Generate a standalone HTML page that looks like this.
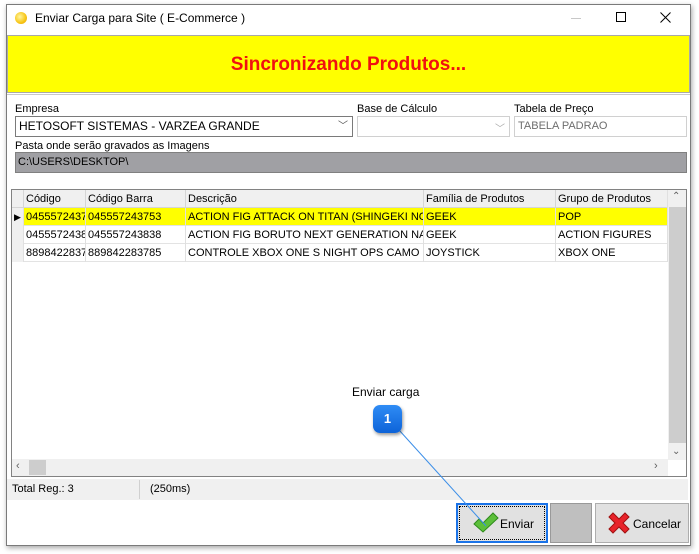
<!DOCTYPE html>
<html><head><style>
*{box-sizing:border-box;margin:0;padding:0}
body{width:699px;height:554px;background:#fff;font-family:"Liberation Sans",sans-serif;font-size:11px;color:#000;position:relative;overflow:hidden}
.a{position:absolute}
.win{left:6px;top:4px;width:685px;height:542px;border:1px solid #7a7a7a;background:#fff;box-shadow:1px 2px 5px rgba(0,0,0,.35)}
.lbl{font-size:11px;color:#000}
.cell{position:absolute;top:0;height:18px;line-height:18px;padding-left:2px;white-space:nowrap;overflow:hidden;border-right:1px solid #e0e0e0}
.row{position:absolute;left:12px;width:656px;height:18px;border-bottom:1px solid #e3e3e3}
</style></head><body>
<div class="a win"></div>
<div class="a" style="left:15px;top:12px;width:12px;height:12px;border-radius:50%;background:radial-gradient(circle at 40% 40%,#fff6a0,#f7c515 60%,#e89a00)"></div>
<div class="a" style="left:35px;top:11px;font-size:12px;color:#000">Enviar Carga para Site ( E-Commerce )</div>
<div class="a" style="left:571px;top:18px;width:10px;height:1px;background:#c8c8c8"></div>
<div class="a" style="left:616px;top:12px;width:10px;height:10px;border:1px solid #000"></div>
<svg class="a" style="left:660px;top:12px" width="11" height="11"><path d="M0.5 0.5L10.5 10.5M10.5 0.5L0.5 10.5" stroke="#000" stroke-width="1"/></svg>
<div class="a" style="left:7px;top:35px;width:683px;height:58px;background:#ffff00;border:1px solid #a8a8a8;text-align:center;line-height:58px;font-weight:bold;font-size:19px;color:#f01010">Sincronizando Produtos...</div>
<div class="a" style="left:7px;top:94px;width:683px;height:1px;background:#c8c8c8"></div>
<div class="a lbl" style="left:15px;top:103px">Empresa</div>
<div class="a" style="left:15px;top:116px;width:338px;height:21px;border:1px solid #7a7a7a;padding-left:3px;line-height:19px;font-size:12px">HETOSOFT SISTEMAS - VARZEA GRANDE<span style="position:absolute;right:4px;top:0;color:#555;font-size:10px">﹀</span></div>
<div class="a lbl" style="left:357px;top:103px">Base de Cálculo</div>
<div class="a" style="left:357px;top:116px;width:153px;height:21px;border:1px solid #d0d0d0;background:#fff"><span style="position:absolute;right:4px;top:3px;color:#aaa;font-size:10px">﹀</span></div>
<div class="a lbl" style="left:514px;top:103px">Tabela de Preço</div>
<div class="a" style="left:514px;top:116px;width:173px;height:21px;border:1px solid #d0d0d0;padding-left:3px;line-height:19px;color:#6d6d6d">TABELA PADRAO</div>
<div class="a lbl" style="left:15px;top:140px">Pasta onde serão gravados as Imagens</div>
<div class="a" style="left:15px;top:152px;width:672px;height:21px;background:#a0a0a4;border:1px solid #808080;padding-left:2px;line-height:19px">C:\USERS\DESKTOP\</div>
<div class="a" style="left:11px;top:189px;width:676px;height:288px;border:1px solid #828282;background:#fff"></div>
<div class="a" style="left:12px;top:190px;width:656px;height:18px;background:#f0f0f0;border-bottom:1px solid #d5d5d5">
<div class="cell" style="left:0;width:12px;border-right:1px solid #d5d5d5"></div>
<div class="cell" style="left:12px;width:62px;border-right-color:#d5d5d5">Código</div>
<div class="cell" style="left:74px;width:100px;border-right-color:#d5d5d5">Código Barra</div>
<div class="cell" style="left:174px;width:238px;border-right-color:#d5d5d5">Descrição</div>
<div class="cell" style="left:412px;width:132px;border-right-color:#d5d5d5">Família de Produtos</div>
<div class="cell" style="left:544px;width:112px">Grupo de Produtos</div>
</div>
<div class="row" style="top:208px">
<div class="cell" style="left:0;width:12px;background:#f0f0f0;font-size:9px;line-height:18px">▶</div>
<div style="position:absolute;left:12px;top:0;width:644px;height:17px;background:#ffff00"></div>
<div class="cell" style="left:12px;width:62px">045557243753</div><div class="cell" style="left:74px;width:100px">045557243753</div><div class="cell" style="left:174px;width:238px">ACTION FIG ATTACK ON TITAN (SHINGEKI NO KYOJIN)</div><div class="cell" style="left:412px;width:132px">GEEK</div><div class="cell" style="left:544px;width:112px">POP</div>
</div>
<div class="row" style="top:226px">
<div class="cell" style="left:0;width:12px;background:#f0f0f0"></div>
<div class="cell" style="left:12px;width:62px">045557243838</div><div class="cell" style="left:74px;width:100px">045557243838</div><div class="cell" style="left:174px;width:238px">ACTION FIG BORUTO NEXT GENERATION NARUTO</div><div class="cell" style="left:412px;width:132px">GEEK</div><div class="cell" style="left:544px;width:112px">ACTION FIGURES</div>
</div>
<div class="row" style="top:244px">
<div class="cell" style="left:0;width:12px;background:#f0f0f0"></div>
<div class="cell" style="left:12px;width:62px">889842283785</div><div class="cell" style="left:74px;width:100px">889842283785</div><div class="cell" style="left:174px;width:238px">CONTROLE XBOX ONE S NIGHT OPS CAMO</div><div class="cell" style="left:412px;width:132px">JOYSTICK</div><div class="cell" style="left:544px;width:112px">XBOX ONE</div>
</div>
<div class="a" style="left:668px;top:190px;width:18px;height:270px;background:#f0f0f0"></div>
<div class="a" style="left:669px;top:207px;width:17px;height:236px;background:#cdcdcd"></div>
<div class="a" style="left:672px;top:191px;font-size:10px;color:#606060">⌃</div>
<div class="a" style="left:672px;top:446px;font-size:10px;color:#606060">⌄</div>
<div class="a" style="left:12px;top:459px;width:656px;height:17px;background:#f0f0f0"></div>
<div class="a" style="left:29px;top:460px;width:17px;height:15px;background:#cdcdcd"></div>
<div class="a" style="left:16px;top:460px;font-size:11px;color:#606060">‹</div>
<div class="a" style="left:654px;top:460px;font-size:11px;color:#606060">›</div>
<div class="a" style="left:7px;top:479px;width:681px;height:21px;background:#f0f0f0"></div>
<div class="a" style="left:139px;top:480px;width:1px;height:19px;background:#d0d0d0"></div>
<div class="a" style="left:12px;top:483px">Total Reg.: 3</div>
<div class="a" style="left:150px;top:483px">(250ms)</div>
<div class="a" style="left:456px;top:503px;width:92px;height:40px;border:2px solid #1a73e8;background:#e1e1e1;outline:1px dotted #000;outline-offset:-4px"></div>
<svg class="a" style="left:473px;top:512px" width="26" height="22" viewBox="0 0 26 22"><path d="M1 12 L6 7 L10 11 L20 1 L25 6 L10 20 Z" fill="#5cbf3a" stroke="#2e8a1c" stroke-width="1"/></svg>
<div class="a" style="left:500px;top:517px;font-size:12px">Enviar</div>
<div class="a" style="left:550px;top:503px;width:42px;height:40px;background:#bfbfbf;border:1px solid #999"></div>
<div class="a" style="left:595px;top:503px;width:94px;height:40px;background:#e1e1e1;border:1px solid #adadad"></div>
<svg class="a" style="left:607px;top:511px" width="24" height="24" viewBox="0 0 24 24"><path d="M2 6 L6 2 L12 8 L18 2 L22 6 L16 12 L22 18 L18 22 L12 16 L6 22 L2 18 L8 12 Z" fill="#e8232a" stroke="#a01010" stroke-width="1"/></svg>
<div class="a" style="left:633px;top:517px;font-size:12px">Cancelar</div>
<div class="a" style="left:352px;top:385px;font-size:12px">Enviar carga</div>
<svg class="a" style="left:0;top:0" width="699" height="554"><line x1="399" y1="430" x2="486" y2="526" stroke="#3b8ee8" stroke-width="1"/></svg>
<div class="a" style="left:373px;top:405px;width:29px;height:28px;border-radius:7px;background:linear-gradient(#2f8cf5,#0d63d8);color:#fff;font-weight:bold;font-size:13px;text-align:center;line-height:28px;box-shadow:1px 2px 3px rgba(0,0,0,.4)">1</div>
</body></html>
